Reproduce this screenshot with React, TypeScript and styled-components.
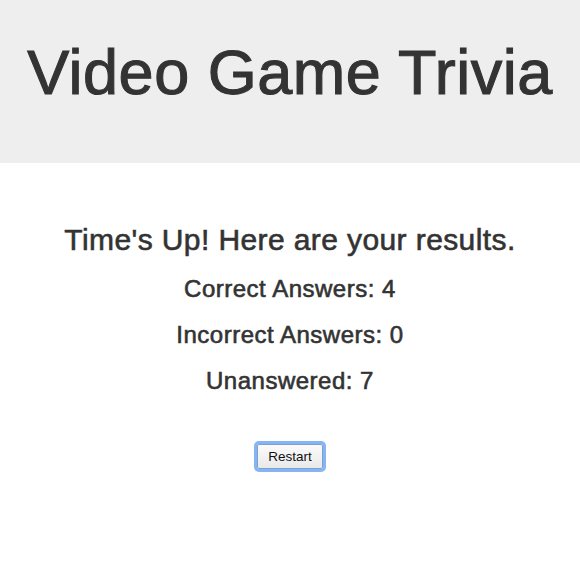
import React from 'react';
import styled, { createGlobalStyle } from 'styled-components';

const GlobalStyle = createGlobalStyle`
  html, body {
    margin: 0;
    padding: 0;
    background: #fff;
  }
  body {
    font-family: "Liberation Sans", Arial, Helvetica, sans-serif;
    color: #333;
  }
`;

const Jumbotron = styled.header`
  background: #eee;
  padding: 38px 0 56px;
  text-align: center;
`;

// headings are Helvetica Neue medium in the original; a thin stroke thickens Liberation Sans
const Title = styled.h1`
  margin: 0;
  font-size: 63px;
  line-height: 69px;
  font-weight: 400;
  letter-spacing: 0.5px;
  color: #333;
  -webkit-text-stroke: 1.1px #333;
`;

const Results = styled.main`
  padding-top: 60px;
  padding-bottom: 20px;
  text-align: center;
`;

const Heading = styled.h2`
  margin: 0 0 20px;
  font-size: 30px;
  line-height: 33px;
  font-weight: 400;
  letter-spacing: 0.4px;
  -webkit-text-stroke: 0.6px #333;
`;

const Stat = styled.h3`
  margin: 0 0 20px;
  font-size: 24px;
  line-height: 26px;
  font-weight: 400;
  letter-spacing: 0.5px;
  -webkit-text-stroke: 0.6px #333;
`;

const ButtonRow = styled.div`
  margin-top: 50px;
  display: flex;
  justify-content: center;
`;

const RestartButton = styled.button`
  font-family: "Liberation Sans", Arial, sans-serif;
  font-size: 13.5px;
  line-height: 15px;
  padding: 4px 10px;
  color: #111;
  background: linear-gradient(#fbfbfb, #e9e9e9);
  border: 1px solid #7f9fcc;
  border-radius: 2px;
  box-shadow: 0 0 0 3px #85b5f5;
  cursor: pointer;
  outline: none;
`;

type Result = { label: string; value: number };

const results: Result[] = [
  { label: 'Correct Answers', value: 4 },
  { label: 'Incorrect Answers', value: 0 },
  { label: 'Unanswered', value: 7 },
];

const App: React.FC = () => (
  <>
    <GlobalStyle />
    <Jumbotron>
      <Title>Video Game Trivia</Title>
    </Jumbotron>
    <Results>
      <Heading>Time's Up! Here are your results.</Heading>
      {results.map((r) => (
        <Stat key={r.label}>
          {r.label}: {r.value}
        </Stat>
      ))}
      <ButtonRow>
        <RestartButton>Restart</RestartButton>
      </ButtonRow>
    </Results>
  </>
);

export default App;
